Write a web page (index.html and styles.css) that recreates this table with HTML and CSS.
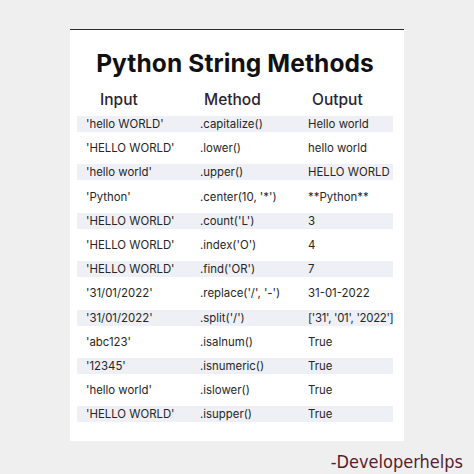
FILE: index.html
```html
<!DOCTYPE html>
<html>
<head>
<meta charset="utf-8">
<link rel="stylesheet" href="styles.css">
</head>
<body>
<div class="page">
  <div class="card">
    <h1 class="title">Python String Methods</h1>
    <div class="head">
      <div class="h h-in">Input</div>
      <div class="h h-me">Method</div>
      <div class="h h-out">Output</div>
    </div>
    <div class="rows">
      <div class="row alt"><span>'hello WORLD'</span><span>.capitalize()</span><span>Hello world</span></div>
      <div class="row"><span>'HELLO WORLD'</span><span>.lower()</span><span>hello world</span></div>
      <div class="row alt"><span>'hello world'</span><span>.upper()</span><span>HELLO WORLD</span></div>
      <div class="row"><span>'Python'</span><span>.center(10, '*')</span><span>**Python**</span></div>
      <div class="row alt"><span>'HELLO WORLD'</span><span>.count('L')</span><span>3</span></div>
      <div class="row"><span>'HELLO WORLD'</span><span>.index('O')</span><span>4</span></div>
      <div class="row alt"><span>'HELLO WORLD'</span><span>.find('OR')</span><span>7</span></div>
      <div class="row"><span>'31/01/2022'</span><span>.replace('/', '-')</span><span>31-01-2022</span></div>
      <div class="row alt"><span>'31/01/2022'</span><span>.split('/')</span><span class="tight">['31', '01', '2022']</span></div>
      <div class="row"><span>'abc123'</span><span>.isalnum()</span><span>True</span></div>
      <div class="row alt"><span>'12345'</span><span>.isnumeric()</span><span>True</span></div>
      <div class="row"><span>'hello world'</span><span>.islower()</span><span>True</span></div>
      <div class="row alt"><span>'HELLO WORLD'</span><span>.isupper()</span><span>True</span></div>
    </div>
  </div>
  <div class="sign">-Developerhelps</div>
</div>
</body>
</html>
```
FILE: styles.css
```css
html, body {
  margin: 0;
  padding: 0;
  background: #efefef;
}
.page {
  width: 474px;
  height: 474px;
  padding-top: 29px;
  box-sizing: border-box;
  font-family: "Inter", "Open Sans", sans-serif;
  color: #1f1f1f;
}
.card {
  margin-left: 70px;
  width: 334px;
  height: 412px;
  box-sizing: border-box;
  background: #fff;
  border-top: 1px solid #2a2a2a;
  padding: 18px 11px 0 7px;
}
.title {
  margin: 0 0 12px 0;
  font-size: 24.5px;
  line-height: 30px;
  font-weight: 650;
  text-align: center;
  color: #111;
  letter-spacing: 0.1px;
}
.head {
  display: grid;
  grid-template-columns: 114px 108px minmax(0, 1fr);
  padding-left: 9px;
  height: 20px;
  margin-bottom: 6px;
}
.h {
  font-size: 15.5px;
  line-height: 20px;
  font-weight: 500;
  color: #2b2533;
}
.h-in { padding-left: 14px; }
.h-me { padding-left: 4px; }
.h-out { padding-left: 4px; }
.rows {
  display: grid;
  grid-template-columns: minmax(0, 1fr);
  row-gap: 8.2px;
}
.row {
  display: grid;
  grid-template-columns: 114px 108px minmax(0, 1fr);
  padding-left: 9px;
  height: 16px;
  align-items: center;
  font-size: 11.4px;
  line-height: 16px;
  color: #262626;
  white-space: nowrap;
}
.row .tight {
  letter-spacing: -0.3px;
}
.row.alt {
  background: #eef0f6;
}
.sign {
  text-align: right;
  padding-right: 11px;
  margin-top: 10px;
  font-family: "DejaVu Sans Condensed", "DejaVu Sans", sans-serif;
  font-size: 18px;
  line-height: 22px;
  color: #5b1c2c;
}
```
